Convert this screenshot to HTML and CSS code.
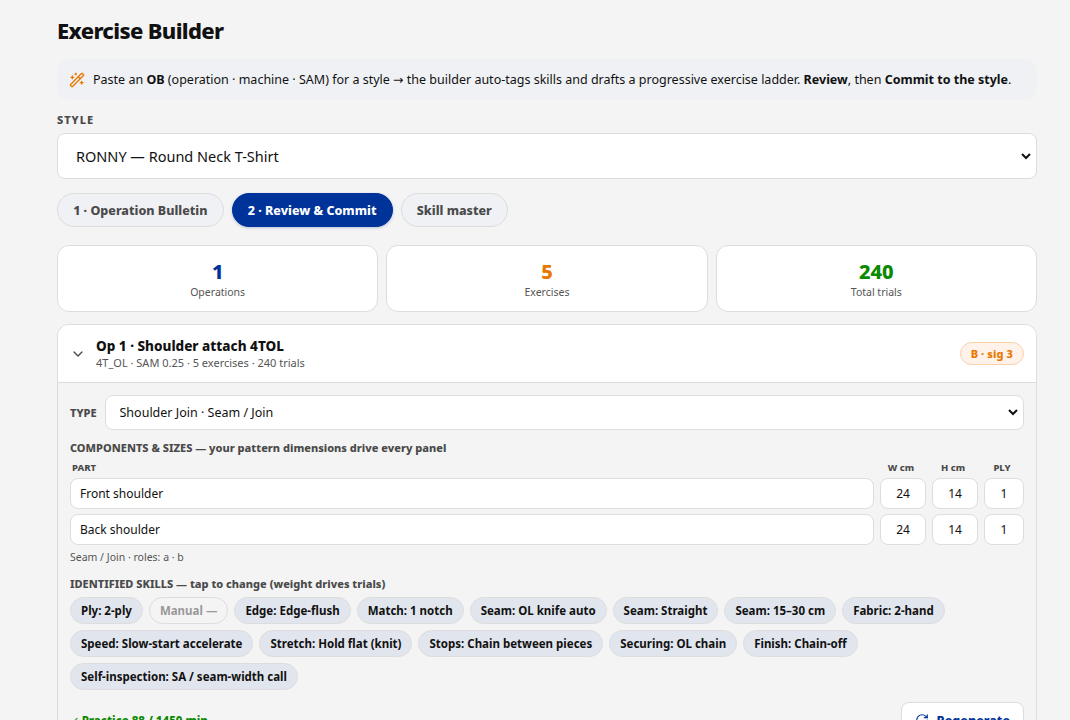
FILE: index.html
```html
<!DOCTYPE html>
<html lang="en">
<head>
    <meta charset="UTF-8">
    <meta name="viewport" content="width=device-width, initial-scale=1.0">
    <title>Exercise Builder</title>
    <link rel="stylesheet" href="styles.css">
</head>
<body>
    <div class="page">
        <h1>Exercise Builder</h1>
        <div class="hint">
            <svg class="icon" width="16" height="16" viewBox="0 0 24 24">
                <path d="m21.64 3.64-1.28-1.28a1.21 1.21 0 0 0-1.72 0L2.36 18.64a1.21 1.21 0 0 0 0 1.72l1.28 1.28a1.2 1.2 0 0 0 1.72 0L21.64 5.36a1.2 1.2 0 0 0 0-1.72"/>
                <path d="m14 7 3 3M5 6v4M19 14v4M10 2v2M7 8H3M21 16h-4M11 3H9"/>
            </svg>
            <div>Paste an <b>OB</b> (operation · machine · SAM) for a style <span class="symbol">→</span> the builder auto-tags skills and drafts a progressive exercise ladder. <b>Review</b>, then <b>Commit to the style</b>.</div>
        </div>

        <label class="label" for="style">STYLE</label>
        <div class="select style-select">
            <select id="style">
                <option>RONNY — Round Neck T-Shirt</option>
            </select>
        </div>

        <div class="tabs">
            <button class="tab">1 · Operation Bulletin</button>
            <button class="tab active">2 · Review &amp; Commit</button>
            <button class="tab">Skill master</button>
        </div>

        <div class="stats">
            <div class="stat"><div class="num blue">1</div><div class="cap">Operations</div></div>
            <div class="stat"><div class="num orange">5</div><div class="cap">Exercises</div></div>
            <div class="stat"><div class="num green">240</div><div class="cap">Total trials</div></div>
        </div>

        <div class="op">
            <div class="op-head">
                <svg class="icon" width="16" height="16" viewBox="0 0 24 24"><path d="m6 9 6 6 6-6"/></svg>
                <div class="op-title">
                    <div class="op-name">Op 1 · Shoulder attach 4TOL</div>
                    <div class="op-sub">4T_OL · SAM 0.25 · 5 exercises · 240 trials</div>
                </div>
                <span class="badge">B · sig 3</span>
            </div>
            <div class="op-body">
                <div class="type-row">
                    <span class="type-label">TYPE</span>
                    <div class="select type-select">
                        <select>
                            <option>Shoulder Join · Seam / Join</option>
                        </select>
                    </div>
                </div>

                <div class="section">COMPONENTS &amp; SIZES — your pattern dimensions drive every panel</div>
                <div class="parts parts-head">
                    <span>PART</span><span>W cm</span><span>H cm</span><span>PLY</span>
                </div>
                <div class="parts">
                    <input value="Front shoulder"><input value="24"><input value="14"><input value="1">
                </div>
                <div class="parts">
                    <input value="Back shoulder"><input value="24"><input value="14"><input value="1">
                </div>
                <div class="roles">Seam / Join · roles: a · b</div>

                <div class="section">IDENTIFIED SKILLS — tap to change (weight drives trials)</div>
                <div class="chips">
                    <button class="chip">Ply: 2-ply</button>
                    <button class="chip off">Manual —</button>
                    <button class="chip">Edge: Edge-flush</button>
                    <button class="chip">Match: 1 notch</button>
                    <button class="chip">Seam: OL knife auto</button>
                    <button class="chip">Seam: Straight</button>
                    <button class="chip">Seam: 15–30 cm</button>
                    <button class="chip">Fabric: 2-hand</button>
                    <button class="chip">Speed: Slow-start accelerate</button>
                    <button class="chip">Stretch: Hold flat (knit)</button>
                    <button class="chip">Stops: Chain between pieces</button>
                    <button class="chip">Securing: OL chain</button>
                    <button class="chip">Finish: Chain-off</button>
                    <button class="chip">Self-inspection: SA / seam-width call</button>
                </div>

                <div class="op-foot">
                    <span class="practice"><span class="symbol">✓</span> Practice 88 / 1450 min</span>
                    <button class="regen">
                        <svg class="icon" width="14" height="14" viewBox="0 0 24 24"><path d="M21 12a9 9 0 1 1-9-9c2.52 0 4.93 1 6.74 2.74L21 8"/><path d="M21 3v5h-5"/></svg>
                        Regenerate
                    </button>
                </div>
            </div>
        </div>
    </div>
</body>
</html>
```

FILE: styles.css
```css
* {
    box-sizing: border-box;
}
body {
    margin: 0;
    height: 720px;
    overflow: hidden;
    background: #f4f4f4;
    color: #111;
    font-family: "Noto Sans", sans-serif;
    font-size: 13px;
}
button, input, select {
    margin: 0;
    font-family: inherit;
    color: #111;
}
.page {
    padding: 15px 33px 0 57px;
}
.icon {
    flex: none;
    fill: none;
    stroke: currentColor;
    stroke-width: 2;
    stroke-linecap: round;
    stroke-linejoin: round;
}
.symbol {
    font-family: "DejaVu Sans", sans-serif;
    line-height: 1;
}
h1 {
    margin: 0 0 14px;
    font-size: 22px;
    line-height: 30px;
    font-weight: 800;
    letter-spacing: -0.66px;
}
.hint {
    display: flex;
    align-items: center;
    gap: 8px;
    height: 41px;
    padding: 0 12px;
    border-radius: 12px;
    background: #f0f1f5;
    font-size: 12.5px;
}
.hint .icon {
    color: #e87800;
}
.label {
    display: block;
    margin: 12px 0 5px;
    font-size: 11px;
    line-height: 16px;
    font-weight: 800;
    letter-spacing: 1px;
    color: #4a4a4a;
}
.select {
    display: flex;
    padding-right: 2px;
    border: 1px solid #ddd;
    border-radius: 8px;
    background: #fff;
}
.select select {
    flex: 1;
    padding: 0;
    border: 0;
    background: transparent;
    font-size: inherit;
}
.style-select {
    height: 46px;
    padding-left: 14px;
    font-size: 14.5px;
}
.tabs {
    display: flex;
    gap: 8px;
    margin: 14px 0 18px;
}
.tab {
    height: 34px;
    padding: 0 15.15px;
    border: 1px solid #ddd;
    border-radius: 17px;
    background: #f0f1f5;
    color: #4a4a4a;
    font-size: 12.5px;
    font-weight: 800;
}
.tab.active {
    border-color: #003399;
    background: #003399;
    color: #fff;
    box-shadow: 0 1px 3px rgba(0, 51, 153, .25);
}
.stats {
    display: grid;
    grid-template-columns: repeat(3, 1fr);
    gap: 8px;
    margin-bottom: 12px;
}
.stat {
    height: 67px;
    padding-top: 12px;
    border: 1px solid #ddd;
    border-radius: 12px;
    background: #fff;
    text-align: center;
}
.num {
    font-size: 20px;
    line-height: 27px;
    font-weight: 800;
}
.blue {
    color: #003399;
}
.orange {
    color: #e87800;
}
.green {
    color: #0a8a00;
}
.cap {
    font-size: 10.5px;
    line-height: 14px;
    color: #555;
}
.op {
    border: 1px solid #ddd;
    border-radius: 12px;
    overflow: hidden;
}
.op-head {
    display: flex;
    align-items: center;
    gap: 10px;
    height: 58px;
    padding: 0 12px;
    border-bottom: 1px solid #ddd;
    background: #fff;
}
.op-head .icon {
    color: #4a4a4a;
}
.op-title {
    flex: 1;
}
.op-name {
    font-size: 13.5px;
    line-height: 18px;
    font-weight: 800;
}
.op-sub {
    font-size: 11px;
    line-height: 15px;
    color: #555;
}
.badge {
    height: 23px;
    padding: 0 10px;
    border: 1px solid #fad0a5;
    border-radius: 12px;
    background: #fef2ea;
    color: #e87800;
    font-size: 11px;
    line-height: 21px;
    font-weight: 800;
    letter-spacing: 0.1px;
}
.op-body {
    padding: 12px;
}
.type-row {
    display: flex;
    align-items: center;
    gap: 8px;
    margin-bottom: 10px;
}
.type-label {
    font-size: 11px;
    font-weight: 800;
    color: #4a4a4a;
}
.type-select {
    flex: 1;
    height: 35px;
    padding-left: 10px;
    font-size: 12.5px;
}
.section {
    font-size: 11px;
    line-height: 16px;
    font-weight: 800;
    color: #4a4a4a;
}
.parts {
    display: grid;
    grid-template-columns: 1fr 46px 46px 40px;
    gap: 6px;
    margin-bottom: 5px;
}
.parts-head {
    margin: 4px 0 3px;
    padding: 0 2px;
    font-size: 9.5px;
    line-height: 15px;
    font-weight: 800;
    color: #4a4a4a;
    text-align: center;
}
.parts-head span:first-child {
    text-align: left;
}
.parts input {
    width: 100%;
    height: 31px;
    padding: 0 4px;
    border: 1px solid #ddd;
    border-radius: 8px;
    background: #fff;
    font-size: 12px;
    text-align: center;
}
.parts input:first-child {
    padding: 0 9px;
    text-align: left;
}
.roles {
    margin-bottom: 11px;
    font-size: 10.5px;
    line-height: 15px;
    color: #555;
}
.chips {
    display: flex;
    flex-wrap: wrap;
    gap: 6px;
    margin: 5px 0 12px;
}
.chip {
    height: 27px;
    padding: 0 10px;
    border: 1px solid #ddd;
    border-radius: 14px;
    background: #e1e5ee;
    font-size: 11.5px;
    font-weight: 700;
}
.chip.off {
    background: transparent;
    color: #999;
}
.op-foot {
    display: flex;
    align-items: center;
    justify-content: space-between;
}
.practice {
    color: #0a8a00;
    font-size: 11.5px;
    font-weight: 800;
}
.practice .symbol {
    margin-right: -1px;
}
.regen {
    display: flex;
    align-items: center;
    gap: 7px;
    height: 36px;
    padding: 0 13px;
    border: 1px solid #ddd;
    border-radius: 8px;
    background: #fff;
    color: #003399;
    font-size: 12.5px;
    font-weight: 800;
}
```
